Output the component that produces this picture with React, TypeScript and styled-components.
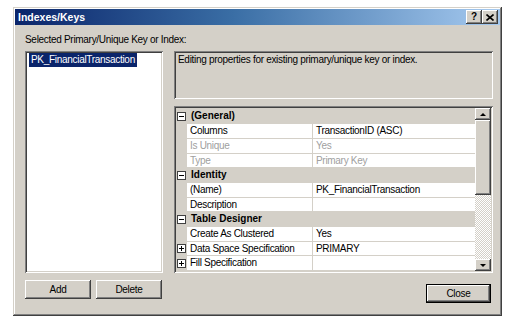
import React from 'react';
import styled, { createGlobalStyle, css } from 'styled-components';

const FACE = '#d4d0c8';
const SHADOW = '#808080';
const DARK = '#404040';
const HILITE = '#ffffff';

const GlobalStyle = createGlobalStyle`
  html, body { margin: 0; padding: 0; background: #fff; }
  body {
    font-family: Tahoma, "Liberation Sans", Arial, sans-serif;
    font-size: 10px;
    letter-spacing: -0.3px;
    color: #000;
  }
`;

const raised = css`
  background: ${FACE};
  box-shadow: inset -1px -1px ${DARK}, inset 1px 1px ${HILITE},
    inset -2px -2px ${SHADOW}, inset 2px 2px ${FACE};
`;

const sunken = css`
  box-shadow: inset 1px 1px ${SHADOW}, inset -1px -1px ${HILITE},
    inset 2px 2px ${DARK}, inset -2px -2px ${FACE};
`;

const Window = styled.div`
  margin: 7px 0 0 13px;
  width: 489px;
  height: 309px;
  box-sizing: border-box;
  padding: 2px;
  background: ${FACE};
  box-shadow: inset -1px -1px ${DARK}, inset 1px 1px ${FACE},
    inset -2px -2px ${SHADOW}, inset 2px 2px ${HILITE};
  display: flex;
  flex-direction: column;
`;

const TitleBar = styled.div`
  height: 16px;
  background: linear-gradient(to right, #0a246a 0%, #3a6ea5 45%, #a6caf0 100%);
  display: flex;
  align-items: center;
  padding: 0 2px 0 3px;
`;

const Title = styled.span`
  flex: 1;
  color: #fff;
  font-weight: bold;
  font-size: 10.5px;
  letter-spacing: 0;
`;

const CaptionButton = styled.div`
  ${raised};
  width: 16px;
  height: 14px;
  box-sizing: border-box;
  display: flex;
  align-items: center;
  justify-content: center;
  font-weight: bold;
  font-size: 10px;
  letter-spacing: 0;
  line-height: 1;
`;

const Body = styled.div`
  flex: 1;
  display: flex;
  flex-direction: column;
  padding: 9px 7px 0 10px;
`;

const Label = styled.div`
  height: 12px;
  line-height: 12px;
`;

const MainRow = styled.div`
  margin-top: 5px;
  height: 222px;
  display: flex;
  gap: 11px;
`;

const ListBox = styled.div`
  ${sunken};
  background: #fff;
  width: 138px;
  box-sizing: border-box;
  padding: 2px 3px 2px 4px;
`;

const ListItem = styled.div<{ $selected?: boolean }>`
  display: inline-block;
  height: 14px;
  line-height: 14px;
  padding: 0 2px;
  background: ${(p) => (p.$selected ? '#0a246a' : 'transparent')};
  color: ${(p) => (p.$selected ? '#fff' : '#000')};
`;

const RightColumn = styled.div`
  width: 319px;
  display: flex;
  flex-direction: column;
  gap: 7px;
`;

const Description = styled.div`
  ${sunken};
  height: 52px;
  box-sizing: border-box;
  padding: 3px 4px;
  line-height: 12px;
`;

const Grid = styled.div`
  ${sunken};
  flex: 1;
  box-sizing: border-box;
  padding: 2px;
  display: flex;
  background: ${FACE};
`;

const Rows = styled.div`
  flex: 1;
  overflow: hidden;
  display: flex;
  flex-direction: column;
  padding-top: 1px;
`;

const Row = styled.div`
  flex: 0 0 14.7px;
  height: 14.7px;
  display: grid;
  grid-template-columns: 11px 126px 1fr;
  line-height: 14px;
`;

const MarginCell = styled.div`
  background: ${FACE};
  display: flex;
  align-items: center;
  justify-content: center;
`;

const CategoryLabel = styled.div`
  grid-column: 2 / 4;
  background: ${FACE};
  font-weight: bold;
  padding-left: 4px;
  letter-spacing: 0;
`;

const Cell = styled.div<{ $disabled?: boolean; $divider?: boolean }>`
  background: #fff;
  box-sizing: border-box;
  border-bottom: 1px solid ${FACE};
  border-right: ${(p) => (p.$divider ? `1px solid ${FACE}` : 'none')};
  padding-left: 3px;
  color: ${(p) => (p.$disabled ? '#a0a0a0' : '#000')};
  white-space: nowrap;
  overflow: hidden;
`;

const ScrollBar = styled.div`
  width: 16px;
  display: flex;
  flex-direction: column;
`;

const ScrollButton = styled.div`
  ${raised};
  height: 12px;
  display: flex;
  align-items: center;
  justify-content: center;
`;

const Arrow = styled.div<{ $dir: 'up' | 'down' }>`
  width: 0;
  height: 0;
  border-left: 3px solid transparent;
  border-right: 3px solid transparent;
  ${(p) =>
    p.$dir === 'up'
      ? css`border-bottom: 3px solid #000;`
      : css`border-top: 3px solid #000;`}
`;

const Thumb = styled.div`
  ${raised};
  height: 75px;
`;

const Track = styled.div`
  flex: 1;
  background: repeating-conic-gradient(${FACE} 0 25%, #fff 0 50%) 0 0 / 2px 2px;
`;

const BottomRow = styled.div`
  margin-top: 7px;
  display: flex;
  align-items: flex-start;
`;

const ButtonGroup = styled.div`
  display: flex;
  gap: 5px;
  flex: 1;
`;

const PushButton = styled.div<{ $default?: boolean }>`
  width: ${(p) => (p.$default ? 65 : 66)}px;
  height: 19px;
  box-sizing: border-box;
  background: ${FACE};
  display: flex;
  align-items: center;
  justify-content: center;
  ${(p) =>
    p.$default
      ? css`
          margin-top: 4px;
          margin-right: 2px;
          box-shadow: inset 0 0 0 1px #000, inset -2px -2px ${DARK},
            inset 2px 2px ${HILITE}, inset -3px -3px ${SHADOW};
        `
      : css`
          box-shadow: inset -1px -1px ${DARK}, inset 1px 1px ${HILITE},
            inset -2px -2px ${SHADOW};
        `}
`;

const ExpandIcon = ({ open }: { open: boolean }) => (
  <svg width="9" height="9" viewBox="0 0 9 9">
    <rect x="0.5" y="0.5" width="8" height="8" fill="#fff" stroke="#404040" />
    <line x1="2" y1="4.5" x2="7" y2="4.5" stroke="#000" />
    {!open && <line x1="4.5" y1="2" x2="4.5" y2="7" stroke="#000" />}
  </svg>
);

type Item =
  | { cat: string }
  | { name: string; value: string; disabled?: boolean; expandable?: boolean };

const items: Item[] = [
  { cat: '(General)' },
  { name: 'Columns', value: 'TransactionID (ASC)' },
  { name: 'Is Unique', value: 'Yes', disabled: true },
  { name: 'Type', value: 'Primary Key', disabled: true },
  { cat: 'Identity' },
  { name: '(Name)', value: 'PK_FinancialTransaction' },
  { name: 'Description', value: '' },
  { cat: 'Table Designer' },
  { name: 'Create As Clustered', value: 'Yes' },
  { name: 'Data Space Specification', value: 'PRIMARY', expandable: true },
  { name: 'Fill Specification', value: '', expandable: true },
];

export default function App() {
  return (
    <>
      <GlobalStyle />
      <Window>
        <TitleBar>
          <Title>Indexes/Keys</Title>
          <CaptionButton>?</CaptionButton>
          <CaptionButton>
            <svg width="8" height="7" viewBox="0 0 8 7">
              <path d="M0.5 0.5 L7.5 6.5 M7.5 0.5 L0.5 6.5" stroke="#000" strokeWidth="1.6" />
            </svg>
          </CaptionButton>
        </TitleBar>
        <Body>
          <Label>Selected Primary/Unique Key or Index:</Label>
          <MainRow>
            <ListBox>
              <ListItem $selected>PK_FinancialTransaction</ListItem>
            </ListBox>
            <RightColumn>
              <Description>
                Editing properties for existing primary/unique key or index.
              </Description>
              <Grid>
                <Rows>
                  {items.map((it, i) =>
                    'cat' in it ? (
                      <Row key={i}>
                        <MarginCell>
                          <ExpandIcon open />
                        </MarginCell>
                        <CategoryLabel>{it.cat}</CategoryLabel>
                      </Row>
                    ) : (
                      <Row key={i}>
                        <MarginCell>
                          {it.expandable && <ExpandIcon open={false} />}
                        </MarginCell>
                        <Cell $divider $disabled={it.disabled}>
                          {it.name}
                        </Cell>
                        <Cell $disabled={it.disabled}>{it.value}</Cell>
                      </Row>
                    )
                  )}
                </Rows>
                <ScrollBar>
                  <ScrollButton>
                    <Arrow $dir="up" />
                  </ScrollButton>
                  <Thumb />
                  <Track />
                  <ScrollButton>
                    <Arrow $dir="down" />
                  </ScrollButton>
                </ScrollBar>
              </Grid>
            </RightColumn>
          </MainRow>
          <BottomRow>
            <ButtonGroup>
              <PushButton>Add</PushButton>
              <PushButton>Delete</PushButton>
            </ButtonGroup>
            <PushButton $default>Close</PushButton>
          </BottomRow>
        </Body>
      </Window>
    </>
  );
}
